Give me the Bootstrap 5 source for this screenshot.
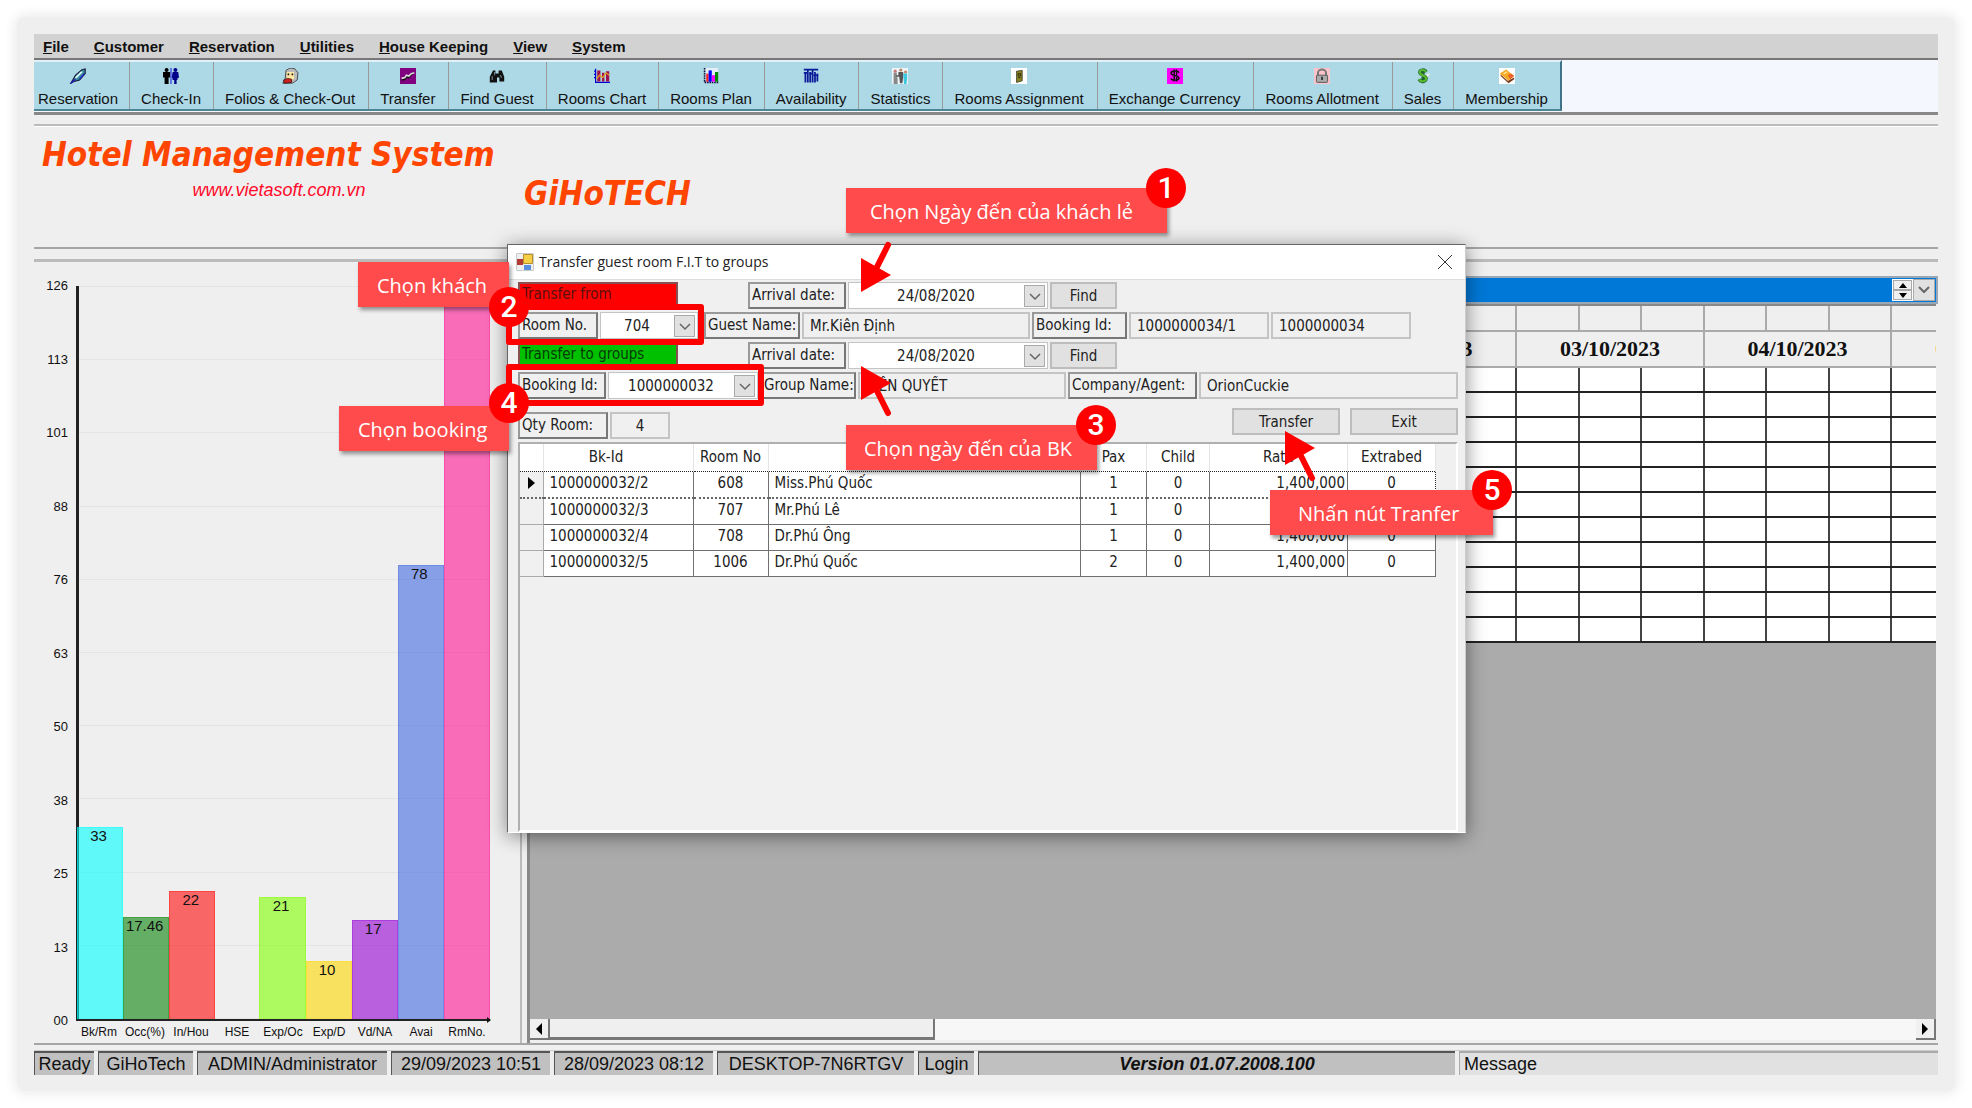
<!DOCTYPE html>
<html lang="vi">
<head>
<meta charset="utf-8">
<meta name="viewport" content="width=device-width, initial-scale=1">
<title>Hotel Management System</title>
<link href="https://cdn.jsdelivr.net/npm/bootstrap@5.3.0/dist/css/bootstrap.min.css" rel="stylesheet">
<style>
body{background:#fff;font-family:"Liberation Sans",Arial,sans-serif;color:#111;font-size:15px;line-height:20px}
.shell{position:relative;margin:17px;padding:17px 17px 16px;background:#efefef;border-radius:8px;box-shadow:0 0 12px 3px #ececec;min-height:calc(100vh - 34px)}
/* menu and toolbar */
.menubar{background:#d2d2d2;height:24px;padding:0 9px;gap:25px;font-weight:bold}
.menubar a{color:#111;text-decoration:none;line-height:26px}
.toolbar{height:57px;border-top:2px solid #777;border-bottom:3px solid #888;background:#f4f7fd;overflow:hidden}
.toolset{background:#add8e6;border-top:2px solid #dff1f6;border-bottom:2px solid #4f8496;border-right:2px solid #3f7386;height:51px}
.tool{border:0;border-left:1px solid #999;background:none;padding:6px 12px 0 11px;color:#111;white-space:nowrap;display:flex;flex-direction:column;align-items:center;line-height:20px}
.tool:first-child{border-left:0;padding:6px 11px 0 4px}
.tool.wide{padding-right:13px}
.tool svg{width:20px;height:20px;margin-bottom:5px;display:block}
/* banner */
.banner{margin-top:9px;height:125px;border-top:2px solid #bbb;border-bottom:2px solid #a5a5a5;box-shadow:inset 0 1px #fff}
.brand{font-family:"DejaVu Sans Condensed","Noto Sans",sans-serif;font-weight:bold;font-style:italic;font-size:33px;line-height:40px;color:#ff4500;margin:0;white-space:nowrap}
.brandbox{width:490px;padding:9px 0 0 8px}
.site{color:#ff0a2a;font-style:italic;font-size:18px;line-height:30px;text-decoration:none}
/* workspace */
.work{margin-top:10px;border-top:3px solid #bbb;border-bottom:2px solid #a5a5a5;min-height:600px}
.chartpane{flex:0 0 488px;padding:24px 30px 0 10px;border-right:2px solid #bbb}
.ylab{width:32px;padding-right:8px;font-size:13px;text-align:right}
.ylab span,.lines i{display:block;height:0;line-height:0}
.plot{position:relative;border-left:3px solid #222;border-bottom:2px solid #222}
.plot::after{content:"";position:absolute;right:-1px;bottom:-4px;border:3px solid transparent;border-left:4px solid #111;border-right:0}
.lines{position:absolute;inset:0}
.lines i{border-top:1px solid #e4e4e4}
.bars{position:relative;height:100%;margin-left:-2px}
.bar{flex:1 1 0;text-align:center;line-height:16px;padding-right:3px;border:1px solid;border-bottom:0}
.bar.none{border:0}
.xlab{font-size:12px;line-height:22px;padding-left:32px}
.xlab span{flex:1 1 0;text-align:center}
.sched{min-width:0;margin-left:5px;border-left:3px solid #888}
.period{margin-top:14px;height:28px;border:2px solid #9aa8b5;background:#0078d7;padding:1px}
.period select{background:transparent;border:0;color:#fff;appearance:none}
.spin{width:21px;background:#fff;padding:1px}
.spin button,.drop,.sbtn{border:1px solid #aaa;background:#f0f0f0;padding:0;display:flex;align-items:center;justify-content:center}
.spin button{flex:1}
.drop{width:22px;background:#e1e1e1}
.gridwrap{background:#ababab;overflow:hidden;margin-right:2px;border-top:2px solid #888}
.days{table-layout:fixed;border-collapse:collapse;background:#fff;width:1549px;border-bottom:1px solid #999}
.days th,.days td{padding:0;border-right:2px solid #444;border-bottom:2px solid #222;height:25px}
.days thead th{background:#efefef;border:0 solid #aaa;border-width:0 2px 2px 0;text-align:center;font-family:"Liberation Serif","Times New Roman",serif;font-size:22px;line-height:34px}
.days thead tr:last-child th{height:36px}
.days .today{color:#ff8c1a}
.hbar{height:21px;background:#f7f7f7;margin:0 2px 3px 0}
.sbtn{width:20px;border:0;border-right:2px solid #777;border-bottom:2px solid #777}
.thumb{width:385px;background:#efefef;border-right:2px solid #777;border-bottom:3px solid #777}
/* status bar */
.status{margin-top:5px;border-top:1px solid #ccc;gap:4px;font-size:18px;white-space:nowrap}
.status>div{background:#c0c0c0;border-top:2px solid #555;border-left:1px solid #555;line-height:23px;height:24px;text-align:center}
.status .ver{font-weight:bold;font-style:italic}
.status .msg{background:#e1e1e1;border-color:#aaa;text-align:left;padding-left:4px;width:479px}
.c60{width:60px}.c95{width:95px}.c190{width:190px}.c159{width:159px}.c197{width:197px}.c56{width:56px}
/* dialog */
.dlg{position:absolute;left:490px;top:227px;width:959px;height:589px;background:#f0f0f0;border:1px solid #666;border-right-color:#ccc;border-bottom-color:#fff;box-shadow:0 3px 18px #0007;font-family:"DejaVu Sans Condensed","Noto Sans",sans-serif;color:#222}
.dlgbar{background:#fff;height:35px;padding:0 13px 0 8px;border-bottom:1px solid #ddd;font-family:"Open Sans",sans-serif;font-size:14px;gap:5px}
.dlgbar button{border:0;background:none;padding:0;line-height:0}
.dlgbody{padding:2px 7px 2px 10px}
.line{height:27px;margin-bottom:3px;display:flex;gap:2px}
.line>*{flex:none}
.line label,.line .tag{border:2px solid;border-color:#999 #777 #777 #999;line-height:22px;padding:0 0 0 2px;white-space:nowrap;overflow:hidden}
.line .tag{border-color:#8a5050;line-height:20px}
.tag.from{background:#f00;color:#5a1010}
.tag.to{background:#00c000;color:#063a06}
.line select,.line input{border:1px solid #c4c4c4;border-radius:0;background:#fff;color:#222;padding:1px 24px 0 0;text-align:center;text-align-last:center;font-size:15px;min-width:0}
.line select{appearance:none;background:#fff url("data:image/svg+xml,%3Csvg xmlns='http://www.w3.org/2000/svg' width='22' height='22'%3E%3Crect x='.5' y='.5' width='20' height='21' fill='%23e1e1e1' stroke='%23aaa'/%3E%3Cpath d='M6 9l5 5 5-5' fill='none' stroke='%23666' stroke-width='1.5'/%3E%3C/svg%3E") no-repeat right 1px center}
.line input{background:#f0f0f0;padding:1px 6px 0;text-align:left;text-align-last:left;border-width:2px}
.line input.mid{text-align:center;text-align-last:center}
.dbtn{border:2px solid #bdbdbd;background:#e1e1e1;color:#222;padding:0;font-size:15px}
.gap-l{margin-left:68px}
.tools{height:31px;margin:9px 0 3px}
.w60{width:60px}.w68{width:67px}.w80{width:80px}.w88{width:88px}.w90{width:90px}.w95{width:95px}.w96{width:96px}.w98{width:98px}.w108{width:108px}.w130{width:129px}.w139{width:140px}.w150{width:150px}.w160{width:160px}.w200{width:200px}.w208{width:208px}.w228{width:228px}
.listbox{border:2px solid;border-color:#b0b0b0 #fff #fff #b0b0b0;height:390px}
.rooms{table-layout:fixed;border-collapse:collapse;width:916px}
.rooms th{font-weight:normal;text-align:center;background:#fff;border-right:1px solid #e5e5e5;padding:0;height:27px}
.rooms th.bkid{padding-right:24px}
.rooms td{background:#fff;border:1px solid #707070;padding:0 0 3px;height:26px;line-height:22px;text-align:center}
.rooms td:first-child{background:#f0f0f0;border-left:0;border-color:#aaa}
.rooms td.l{text-align:left;padding-left:6px}
.rooms td.r{text-align:right;padding-right:2px}
.rooms tr.on td{border-top:1px dotted #222;border-bottom:2px dotted #666}
.rooms tr.on td:last-child{border-right:1px dotted #222}
/* tutorial marks */
.note{position:absolute;background:#ff4b4b;color:#fff;font-family:"Open Sans","Noto Sans",sans-serif;font-size:20px;line-height:27px;height:45px;padding:10px 0 0 24px;box-shadow:2px 3px 4px #0006;white-space:nowrap}
.num{position:absolute;width:40px;height:40px;border-radius:50%;background:#fe0000;color:#fff;font:500 30px/40px Roboto,sans-serif;text-align:center}
.ring{position:absolute;border:6px solid #fe0000;border-radius:3px}
.arrow{position:absolute;width:32px;height:52px;fill:#fe0000;stroke:#fe0000}
</style>
<script src="https://cdn.jsdelivr.net/npm/bootstrap@5.3.0/dist/js/bootstrap.bundle.min.js"></script>
</head>
<body>
<div class="shell d-flex flex-column">
  <nav class="menubar d-flex" aria-label="Main menu">
    <a href="#"><u>F</u>ile</a><a href="#"><u>C</u>ustomer</a><a href="#"><u>R</u>eservation</a><a href="#"><u>U</u>tilities</a><a href="#"><u>H</u>ouse Keeping</a><a href="#"><u>V</u>iew</a><a href="#"><u>S</u>ystem</a>
  </nav>
  <div class="toolbar d-flex">
    <div class="toolset d-flex">
      <button class="tool"><svg viewBox="0 0 20 20"><path d="M1 19L7 9 15 2l4-1v6l-7 8-7 2z" fill="#3a8a9a" stroke="#113" stroke-width="1.3"/><path d="M6 12l8-8 2 1-8 8z" fill="#dff"/><path d="M12 14l6-7M1 19l6-5" stroke="#22c" stroke-width="1.5"/></svg>Reservation</button>
      <button class="tool"><svg viewBox="0 0 20 20"><circle cx="4.500" cy="2.500" r="2.500"/><path d="M0 5h9v7H7v8H2v-8H0z"/><path d="M10 0v20" stroke="#22d" stroke-width="1.300"/><g fill="#00008b"><circle cx="15.500" cy="2.500" r="2.500"/><path d="M12 5h7l1 7-2 1v2h-1v5h-3v-5h-2v-2l-1-1z"/></g></svg>Check-In</button>
      <button class="tool wide"><svg viewBox="0 0 20 20"><path d="M5 3l5-3 6 1 4 5-1 9-6 4H1l3-6z" fill="#bbb" stroke="#333"/><path d="M6 5h9v8l-4 3-5-2z" fill="#ffe9a0"/><path d="M7 8h2M12 8h2" stroke="#111" stroke-width="2"/><path d="M2 15l5-2 5 1v4l-9 1z" fill="#c22" stroke="#411"/></svg>Folios &amp; Check-Out</button>
      <button class="tool wide"><svg viewBox="0 0 20 20"><path fill="#800080" d="M0 0h20v20H0z"/><path d="M2 15l4-1 2-3 3 1 3-4 4-2" fill="none" stroke="#111" stroke-width="2"/><path d="M2 13l4-1 2-3 3 1 3-3 4-1" fill="none" stroke="#ddd" stroke-width="2"/></svg>Transfer</button>
      <button class="tool"><svg viewBox="0 0 20 20"><path d="M5 3h3v4h4V3h4l3 8v6h-6v-5h-3v6H1v-7z" fill="#111"/><path d="M4 10v5M14 9l2 3M7 5v4" stroke="#789" stroke-width="1.300"/></svg>Find Guest</button>
      <button class="tool"><svg viewBox="0 0 20 20"><path d="M2 1v17h18M0 4h2M0 8h2M0 12h2" fill="none" stroke="#00c" stroke-width="1.500"/><path d="M4 3h4v14H4zM10 6h3v11h-3zM15 4h4v13h-4z" fill="#a0104a"/><path d="M3 14l4-5 4 3 4-6 4 3" fill="none" stroke="#e8a020" stroke-width="1.500"/></svg>Rooms Chart</button>
      <button class="tool"><svg viewBox="0 0 20 20"><path fill="#e4eef4" d="M3 0h16v16H3z"/><path d="M2 0v18h18" fill="none" stroke="#114" stroke-width="2" stroke-dasharray="2 1"/><path fill="#f22" d="M4 7h3v10H4z"/><path fill="#00f" d="M7 3h4v14H7z"/><path fill="#f0f" d="M11 9h4v8h-4z"/><path fill="#080" d="M15 5h4v12h-4z"/></svg>Rooms Plan</button>
      <button class="tool"><svg viewBox="0 0 20 20"><path d="M1 2h18M1 6h6M3 5v13M6 2v16M9 5v13M12 2v16M15 5v13M18 7v10" stroke="#0a1a98" stroke-width="2.200"/><path d="M8 7h4M13 9h6" stroke="#0a1a98" stroke-width="2"/></svg>Availability</button>
      <button class="tool"><svg viewBox="0 0 20 20"><path fill="#eef5f8" d="M0 0h20v20H0z"/><circle cx="4" cy="4" r="2" fill="#c77"/><path d="M2 6h4v6h1v8H2z" fill="#888"/><circle cx="11" cy="2.500" r="2" fill="#b86"/><path d="M8 5h6v6l-1 8h-3l-1-8H5V9h3z" fill="#555"/><circle cx="17" cy="5" r="2" fill="#c86"/><path d="M14 7h5v6l-1 7h-3z" fill="#3cc8e0"/></svg>Statistics</button>
      <button class="tool wide"><svg viewBox="0 0 20 20"><path fill="#fff" d="M0 0h20v20H0z"/><path d="M7 4l7-1v13l-7 2z" fill="#8a8420" stroke="#332"/><path d="M9 7h3v3H9zM9 12h3" fill="none" stroke="#221"/></svg>Rooms Assignment</button>
      <button class="tool wide"><svg viewBox="0 0 20 20"><path fill="#f0f" d="M0 0h20v20H0z"/><path d="M15 6c-1-3-10-3-10 .500S15 9 15 12.500 6 16 5 13M9 2v15M12 2v15" fill="none" stroke="#111" stroke-width="1.800"/></svg>Exchange Currency</button>
      <button class="tool wide"><svg viewBox="0 0 20 20"><path fill="#ffc4cb" d="M0 0h20v20H0z"/><path d="M5 9V6a5 4 0 0110 0v3" fill="none" stroke="#777" stroke-width="2.500"/><rect x="3" y="9" width="14" height="9" rx="1" fill="#aaa" stroke="#444"/><path d="M10 11v4" stroke="#222" stroke-width="2"/></svg>Rooms Allotment</button>
      <button class="tool"><svg viewBox="0 0 20 20"><path d="M12 8l7-1-3 4-3 5z" fill="#eee"/><path d="M14 5c-2-4-9-3-8 1s8 3 8 7-7 5-9 1M10 1v18" fill="none" stroke="#263" stroke-width="4"/><path d="M14 5c-2-4-9-3-8 1s8 3 8 7-7 5-9 1" fill="none" stroke="#5bbb2e" stroke-width="2.500"/></svg>Sales</button>
      <button class="tool"><svg viewBox="0 0 20 20"><path fill="#fff" d="M0 0h20v20H0z"/><path d="M2 8l9 8 8-4v2l-7 5-10-9z" fill="#7a3b20"/><path d="M1 7l8-5 10 8-7 6z" fill="#f7a823"/><path d="M11 9l4-2 4 3-5 4z" fill="#e8622a"/><path d="M5 7l4-3 2 1-4 3z" fill="#ffe08a"/></svg>Membership</button>
    </div>
  </div>
  <header class="banner d-flex">
    <div class="brandbox">
      <h1 class="brand">Hotel Management System</h1>
      <div class="text-center pe-2"><a class="site" href="#">www.vietasoft.com.vn</a></div>
    </div>
    <div class="brand mt-5">GiHoTECH</div>
  </header>

  <main class="work d-flex flex-grow-1">
    <section class="chartpane d-flex flex-column">
      <div class="d-flex flex-grow-1">
        <div class="ylab d-flex flex-column justify-content-between"><span>126</span><span>113</span><span>101</span><span>88</span><span>76</span><span>63</span><span>50</span><span>38</span><span>25</span><span>13</span><span>00</span></div>
        <div class="plot flex-grow-1">
          <div class="lines d-flex flex-column justify-content-between"><i></i><i></i><i></i><i></i><i></i><i></i><i></i><i></i><i></i><i></i><i></i></div>
          <div class="bars d-flex align-items-end" id="bars"></div>
        </div>
      </div>
      <div class="xlab d-flex"><span>Bk/Rm</span><span>Occ(%)</span><span>In/Hou</span><span>HSE</span><span>Exp/Oc</span><span>Exp/D</span><span>Vd/NA</span><span>Avai</span><span>RmNo.</span></div>
    </section>
    <section class="sched flex-grow-1 d-flex flex-column">
      <div class="period d-flex">
        <select class="flex-grow-1" aria-label="Period"><option></option></select>
        <div class="spin d-flex flex-column"><button aria-label="Up"><svg width="8" height="5"><path d="M0 5l4-5 4 5z"/></svg></button><button aria-label="Down"><svg width="8" height="5"><path d="M0 0l4 5 4-5z"/></svg></button></div>
        <button class="drop" aria-label="Open"><svg width="12" height="8"><path d="M1 1l5 5 5-5" fill="none" stroke="#666" stroke-width="2"/></svg></button>
      </div>
      <div class="gridwrap flex-grow-1"><table class="days" id="days"></table></div>
      <div class="hbar d-flex"><button class="sbtn" aria-label="Scroll left"><svg width="6" height="12"><path d="M6 0v12L0 6z"/></svg></button><div class="thumb"></div><button class="sbtn ms-auto" aria-label="Scroll right"><svg width="6" height="12"><path d="M0 0v12l6-6z"/></svg></button></div>
    </section>
  </main>

  <footer class="status d-flex">
    <div class="c60">Ready</div><div class="c95">GiHoTech</div><div class="c190">ADMIN/Administrator</div><div class="c159">29/09/2023 10:51</div><div class="c159">28/09/2023 08:12</div><div class="c197">DESKTOP-7N6RTGV</div><div class="c56">Login</div><div class="ver flex-grow-1">Version 01.07.2008.100</div><div class="msg">Message</div>
  </footer>

  <div class="dlg" role="dialog" aria-label="Transfer guest room F.I.T to groups">
    <div class="dlgbar d-flex align-items-center">
      <svg width="18" height="18" viewBox="0 0 18 18"><path d="M.5.5h17v17H.5z" fill="#eee" stroke="#ccc"/><path d="M7.500 1.500h9v9h-9z" fill="#f5cf45" stroke="#b8902a"/><path d="M1 6h6v6H1z" fill="#b33a34"/><path d="M8 12h7v5H8z" fill="#5a8ee0"/></svg>
      <span>Transfer guest room F.I.T to groups</span>
      <button class="ms-auto" aria-label="Close"><svg width="14" height="14"><path d="M0 0l14 14M14 0L0 14" stroke="#333"/></svg></button>
    </div>
    <div class="dlgbody">
      <div class="line"><span class="tag from w160">Transfer from</span><label class="w98 gap-l" for="d1">Arrival date:</label><select id="d1" class="w200"><option>24/08/2020</option></select><button class="dbtn w68">Find</button></div>
      <div class="line"><label class="w80" for="rn">Room No.</label><select id="rn" class="w98"><option>704</option></select><label class="w96 ms-1" for="gn">Guest Name:</label><input id="gn" class="w228" value="Mr.Kiên Định"><label class="w95" for="bi">Booking Id:</label><input id="bi" class="w139" value="1000000034/1"><input class="w139" value="1000000034" aria-label="Booking"></div>
      <div class="line"><span class="tag to w160">Transfer to groups</span><label class="w98 gap-l" for="d2">Arrival date:</label><select id="d2" class="w200"><option>24/08/2020</option></select><button class="dbtn w68">Find</button></div>
      <div class="line"><label class="w88" for="bk">Booking Id:</label><select id="bk" class="w150"><option>1000000032</option></select><label class="w96" for="gr">Group Name:</label><input id="gr" class="w208" value="KIÊN QUYẾT"><label class="w130" for="ca">Company/Agent:</label><input id="ca" class="flex-grow-1" value="OrionCuckie"></div>
      <div class="line tools"><label class="w90 mt-1" for="qt">Qty Room:</label><input id="qt" class="w60 mt-1 mid" value="4"><button class="dbtn w108 ms-auto mb-1">Transfer</button><button class="dbtn w108 ms-2 mb-1">Exit</button></div>
      <div class="listbox">
        <table class="rooms">
          <colgroup><col style="width:23px"><col style="width:150px"><col style="width:75px"><col><col style="width:66px"><col style="width:63px"><col style="width:138px"><col style="width:88px"></colgroup>
          <thead><tr><th></th><th class="bkid">Bk-Id</th><th>Room No</th><th>Guest Name</th><th>Pax</th><th>Child</th><th>Rate</th><th>Extrabed</th></tr></thead>
          <tbody>
            <tr class="on"><td><svg width="7" height="12"><path d="M0 0v12l7-6z"/></svg></td><td class="l">1000000032/2</td><td>608</td><td class="l">Miss.Phú Quốc</td><td>1</td><td>0</td><td class="r">1,400,000</td><td>0</td></tr>
            <tr><td></td><td class="l">1000000032/3</td><td>707</td><td class="l">Mr.Phú Lê</td><td>1</td><td>0</td><td class="r">1,400,000</td><td>0</td></tr>
            <tr><td></td><td class="l">1000000032/4</td><td>708</td><td class="l">Dr.Phú Ông</td><td>1</td><td>0</td><td class="r">1,400,000</td><td>0</td></tr>
            <tr><td></td><td class="l">1000000032/5</td><td>1006</td><td class="l">Dr.Phú Quốc</td><td>2</td><td>0</td><td class="r">1,400,000</td><td>0</td></tr>
          </tbody>
        </table>
      </div>
    </div>
  </div>

  <div class="ring" style="left:489px;top:287px;width:198px;height:41px"></div>
  <div class="ring" style="left:489px;top:347px;width:258px;height:42px"></div>
  <div class="note" style="left:829px;top:171px;width:321px">Chọn Ngày đến của khách lẻ</div>
  <div class="note" style="left:341px;top:245px;width:151px;padding-left:19px">Chọn khách</div>
  <div class="note" style="left:322px;top:389px;width:170px;padding-left:19px">Chọn booking</div>
  <div class="note" style="left:829px;top:408px;width:251px;padding-left:18px">Chọn ngày đến của BK</div>
  <div class="note" style="left:1253px;top:473px;width:223px;padding-left:28px">Nhấn nút Tranfer</div>
  <svg class="arrow" style="left:843px;top:224px"><path stroke="none" d="M1 17v34l30-17z"/><path d="M28 4L14 32" stroke-width="6" stroke-linecap="round"/></svg>
  <svg class="arrow" style="left:843px;top:348px"><path stroke="none" d="M1 1v34l30-17z"/><path d="M28 48L14 20" stroke-width="6" stroke-linecap="round"/></svg>
  <svg class="arrow" style="left:1267px;top:413px"><path stroke="none" d="M1 1v34l30-17z"/><path d="M28 48L14 20" stroke-width="6" stroke-linecap="round"/></svg>
  <div class="num" style="left:1129px;top:151px">1</div>
  <div class="num" style="left:472px;top:270px">2</div>
  <div class="num" style="left:1059px;top:388px">3</div>
  <div class="num" style="left:472px;top:366px">4</div>
  <div class="num" style="left:1455px;top:453px">5</div>
</div>
<script>
// occupancy bars: value, colour
const data=[[33,'0,255,255'],[17.46,'8,130,8'],[22,'255,10,10'],[0,'0,0,0'],[21,'128,255,0'],[10,'255,215,0'],[17,'148,0,211'],[78,'65,105,225'],[126,'255,20,147']];
document.getElementById('bars').innerHTML=data.map(([v,c])=>
  `<div class="bar${v?'':' none'}" style="height:${v/126*100}%;background:rgba(${c},.6);border-color:rgba(${c},.35)">${v&&v<126?v:''}</div>`).join('');
// three columns for each day
const dates=['28/09/2023','29/09/2023','30/09/2023','01/10/2023','02/10/2023','03/10/2023','04/10/2023','05/10/2023'];
const cells=t=>`<tr>${`<${t}></${t}>`.repeat(25)}</tr>`;
document.getElementById('days').innerHTML='<colgroup><col style="width:49px">'+'<col style="width:62px"><col style="width:63px">'.repeat(12)+'</colgroup><thead>'+cells('th')+
  '<tr><th></th>'+dates.map((d,i)=>`<th colspan="3"${i===7?' class="today"':''}>${d}</th>`).join('')+'</tr></thead><tbody>'+cells('td').repeat(11)+'</tbody>';
</script>
</body>
</html>
